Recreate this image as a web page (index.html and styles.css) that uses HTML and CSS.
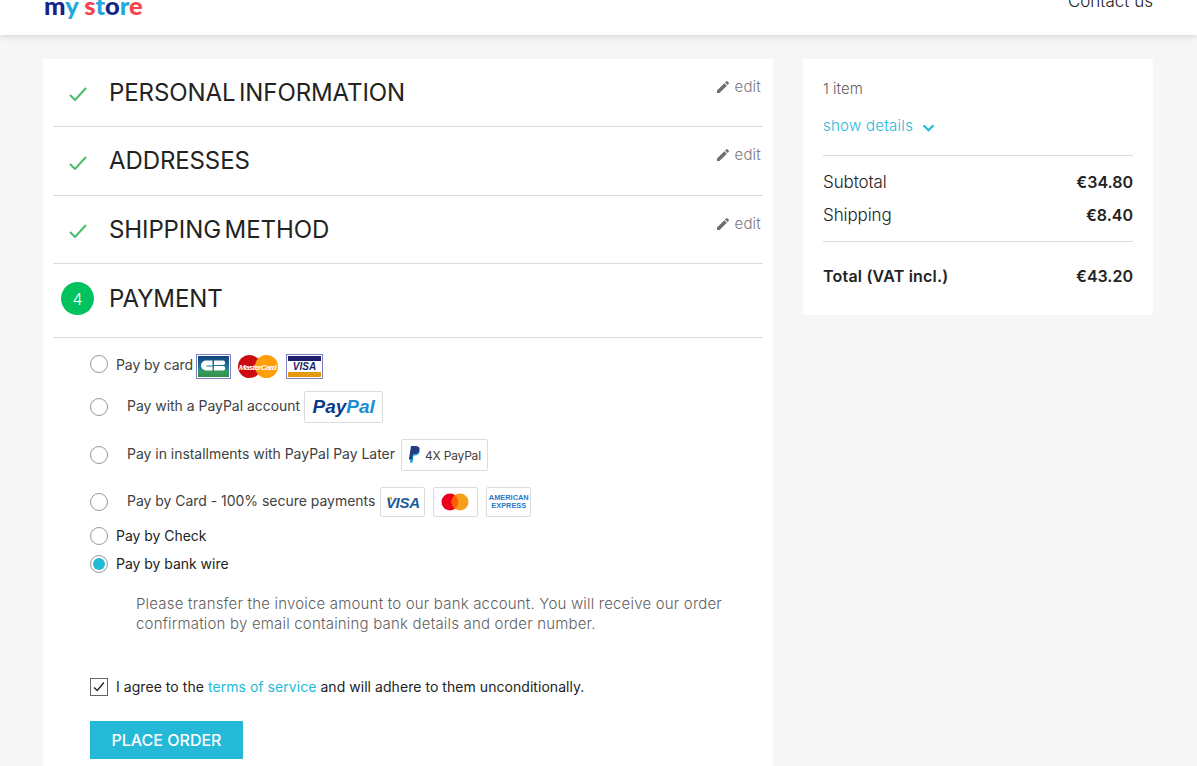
FILE: index.html
```html
<!DOCTYPE html>
<html lang="en">

<head>
    <meta charset="UTF-8">
    <meta name="viewport" content="width=device-width, initial-scale=1.0">
    <title>my store - Checkout</title>
    <link rel="stylesheet" href="styles.css">
</head>

<body>
    <header class="header">
        <a class="logo"><span class="navy">m</span><span class="cyan">y</span> <span class="red">s</span><span class="cyan">t</span><span class="navy">o</span><span class="cyan">r</span><span class="red">e</span></a>
        <a class="contact">Contact us</a>
    </header>

    <main class="page">
        <div class="steps">
            <section class="step">
                <svg class="check" viewBox="0 0 18 14"><path d="M1 8l5 5L17 1"/></svg>
                <h2>PERSONAL INFORMATION</h2>
                <a class="edit"><svg viewBox="0 0 24 24"><path d="M3 17.25V21h3.75L17.8 9.94l-3.75-3.75L3 17.25zM20.7 7.04a1 1 0 0 0 0-1.41l-2.34-2.34a1 1 0 0 0-1.41 0l-1.83 1.83 3.75 3.75 1.83-1.83z"/></svg>edit</a>
            </section>
            <section class="step tall">
                <svg class="check" viewBox="0 0 18 14"><path d="M1 8l5 5L17 1"/></svg>
                <h2>ADDRESSES</h2>
                <a class="edit"><svg viewBox="0 0 24 24"><path d="M3 17.25V21h3.75L17.8 9.94l-3.75-3.75L3 17.25zM20.7 7.04a1 1 0 0 0 0-1.41l-2.34-2.34a1 1 0 0 0-1.41 0l-1.83 1.83 3.75 3.75 1.83-1.83z"/></svg>edit</a>
            </section>
            <section class="step">
                <svg class="check" viewBox="0 0 18 14"><path d="M1 8l5 5L17 1"/></svg>
                <h2>SHIPPING METHOD</h2>
                <a class="edit"><svg viewBox="0 0 24 24"><path d="M3 17.25V21h3.75L17.8 9.94l-3.75-3.75L3 17.25zM20.7 7.04a1 1 0 0 0 0-1.41l-2.34-2.34a1 1 0 0 0-1.41 0l-1.83 1.83 3.75 3.75 1.83-1.83z"/></svg>edit</a>
            </section>
            <section class="step current">
                <span class="number">4</span>
                <h2>PAYMENT</h2>
            </section>

            <div class="options">
                <label class="option card-option">
                    <span class="radio"></span>
                    <span class="option-text">Pay by card</span>
                    <svg class="logo-cb" viewBox="0 0 35 25">
                        <defs>
                            <linearGradient id="cbfill" x1="0" y1="0" x2="0" y2="1">
                                <stop offset="0" stop-color="#12427f"/>
                                <stop offset="0.6" stop-color="#1d7f9f"/>
                                <stop offset="0.72" stop-color="#3a9a5a"/>
                                <stop offset="1" stop-color="#2e9150"/>
                            </linearGradient>
                        </defs>
                        <rect x="0.5" y="0.5" width="34" height="24" fill="#fff" stroke="#7f7fbf"/>
                        <rect x="2" y="2" width="31" height="21" fill="url(#cbfill)"/>
                        <path fill="#fff" d="M16.500 6.500H10a4.700 4.700 0 0 0 0 10h6.500v-4h-6v-1h6z"/>
                        <path fill="#fff" d="M18 6.500h9a2.200 2.200 0 0 1 0 4.400h-9zM18 12h9a2.200 2.200 0 0 1 0 4.500h-9z"/>
                    </svg>
                    <svg class="logo-mc" viewBox="0 0 40 23">
                        <circle cx="11.5" cy="11.5" r="11.5" fill="#cc0b10"/>
                        <circle cx="28.5" cy="11.5" r="11.5" fill="#ff9e0b"/>
                        <text x="20" y="14.5" text-anchor="middle" textLength="38">MasterCard</text>
                    </svg>
                    <svg class="logo-visa" viewBox="0 0 37 25">
                        <rect x="0.5" y="0.5" width="36" height="24" fill="#fff" stroke="#7f7fbf"/>
                        <rect x="2" y="2" width="33" height="5" fill="#1b1f6e"/>
                        <rect x="2" y="18" width="33" height="5" fill="#e39a0e"/>
                        <text x="18.5" y="16" text-anchor="middle">VISA</text>
                    </svg>
                </label>

                <label class="option wallet-option paypal-row">
                    <span class="radio"></span>
                    <span class="option-text">Pay with a PayPal account</span>
                    <span class="badge paypal-badge"><span class="pp-dark">Pay</span><span class="pp-light">Pal</span></span>
                </label>

                <label class="option wallet-option later-row">
                    <span class="radio"></span>
                    <span class="option-text">Pay in installments with PayPal Pay Later</span>
                    <span class="badge later-badge">
                        <svg viewBox="0 0 14 17">
                            <path fill="#179bd7" d="M11.6 4.2c.3 2.6-1.5 5.2-4.6 5.2H5.6L4.5 16.4H1.9l.5-3L4 5.8h4.8c1.200 0 2.200-.6 2.800-1.600z"/>
                            <path fill="#253b80" d="M3 0h4.700c2.600 0 4.200 1.300 3.900 3.600-.4 2.900-2.300 4.400-5 4.400H4.800l-.9 5.400H.9L3 0z"/>
                        </svg>
                        <span>4X PayPal</span>
                    </span>
                </label>

                <label class="option wallet-option cards-row">
                    <span class="radio"></span>
                    <span class="option-text">Pay by Card - 100% secure payments</span>
                    <span class="badge small-badge visa-badge">VISA</span>
                    <span class="badge small-badge">
                        <svg class="mc-plain" viewBox="0 0 28 18">
                            <circle cx="9" cy="9" r="8.500" fill="#eb001b"/>
                            <circle cx="19" cy="9" r="8.500" fill="#f79e1b"/>
                            <path fill="#ff5f00" d="M14 2.200a8.500 8.500 0 0 1 0 13.600 8.500 8.500 0 0 1 0-13.600z"/>
                        </svg>
                    </span>
                    <span class="badge small-badge amex-badge">AMERICAN<br>EXPRESS</span>
                </label>

                <label class="option check-row">
                    <span class="radio"></span>
                    <span class="option-text">Pay by Check</span>
                </label>

                <label class="option wire-row">
                    <span class="radio selected"></span>
                    <span class="option-text">Pay by bank wire</span>
                </label>

                <p class="wire-info">Please transfer the invoice amount to our bank account. You will receive our order confirmation by email containing bank details and order number.</p>

                <label class="terms">
                    <span class="checkbox"><svg viewBox="0 0 18 18"><path d="M3.500 9.500l3.500 3.500 7.500-9"/></svg></span>
                    <span class="terms-text">I agree to the <a class="link">terms of service</a> and will adhere to them unconditionally.</span>
                </label>

                <button class="place-order">PLACE ORDER</button>
            </div>
        </div>

        <aside class="summary">
            <p class="items">1 item</p>
            <a class="show-details">show details <svg viewBox="0 0 13 8"><path d="M1.500 1.200l5 5 5-5"/></svg></a>
            <div class="lines">
                <div class="line"><span>Subtotal</span><strong>€34.80</strong></div>
                <div class="line"><span>Shipping</span><strong>€8.40</strong></div>
            </div>
            <div class="line total"><span>Total (VAT incl.)</span><strong>€43.20</strong></div>
        </aside>
    </main>
</body>

</html>
```

FILE: styles.css
```css
* {
    margin: 0;
    padding: 0;
    box-sizing: border-box;
}

html,
body {
    height: 766px;
    overflow: hidden;
}

body {
    background: #f6f6f6;
    color: #232323;
    font-family: 'Inter', 'Open Sans', sans-serif;
    font-size: 14px;
}

a {
    text-decoration: none;
}

/* header is scrolled, only its bottom edge shows */
.header {
    height: 35px;
    padding: 0 44px;
    background: #fff;
    box-shadow: 0 2px 6px rgba(0, 0, 0, 0.12);
    display: flex;
    justify-content: space-between;
    align-items: flex-end;
    overflow: hidden;
    position: relative;
}

.logo {
    font-family: 'Lato', sans-serif;
    font-size: 25.500px;
    font-weight: 900;
    line-height: 24px;
    margin-bottom: 18px;
}

.navy { color: #14248a; }
.cyan { color: #1fa9dc; }
.red { color: #f9424b; }

.contact {
    font-size: 17px;
    font-weight: 300;
    line-height: 20px;
    color: #232323;
    margin-bottom: 24px;
}

.page {
    padding: 24px 44px 0 43px;
    display: flex;
    align-items: flex-start;
    gap: 30px;
}

.steps {
    width: 730px;
    background: #fff;
    padding: 0 10px;
    flex-shrink: 0;
}

.step {
    height: 68px;
    display: flex;
    align-items: center;
    border-bottom: 1px solid #dcdcdc;
    position: relative;
    padding-bottom: 1px;
}

.step.tall {
    height: 69px;
}

.step h2 {
    font-size: 24px;
    font-weight: 400;
    letter-spacing: -0.1px;
    word-spacing: -3px;
    color: #232323;
}

.check {
    width: 18px;
    height: 14px;
    margin-left: 16px;
    margin-right: 22px;
    margin-top: 4px;
}

.check path {
    fill: none;
    stroke: #4cbb6c;
    stroke-width: 2;
}

.edit {
    position: absolute;
    top: 18px;
    right: 2px;
    display: flex;
    align-items: center;
    gap: 3px;
    color: #7a7a7a;
    font-size: 15px;
    font-weight: 300;
    letter-spacing: 0.2px;
}

.edit svg {
    width: 16px;
    height: 16px;
    fill: #6e6e6e;
}

.step.current {
    height: 74px;
    padding-bottom: 4px;
}

.number {
    width: 33px;
    height: 33px;
    border-radius: 50%;
    background: #00c25f;
    color: #fff;
    font-size: 16px;
    font-weight: 300;
    display: flex;
    align-items: center;
    justify-content: center;
    margin-left: 8px;
    margin-right: 15px;
}

.options {
    padding-left: 37px;
}

.option {
    display: flex;
    align-items: center;
    color: #414141;
    font-size: 14px;
}

.option-text {
    margin-bottom: 3px;
    letter-spacing: -0.03px;
}

.radio {
    width: 18px;
    height: 18px;
    border: 1px solid #979797;
    border-radius: 50%;
    background: #fff;
    flex-shrink: 0;
    margin-right: 8px;
    position: relative;
}

.radio.selected::after {
    content: "";
    position: absolute;
    top: 2px;
    left: 2px;
    width: 12px;
    height: 12px;
    border-radius: 50%;
    background: #24b9d7;
}

.wallet-option .radio {
    margin-right: 19px;
}

.card-option {
    height: 25px;
    margin-top: 16px;
}

.card-option .radio {
    margin-bottom: 5px;
}

.card-option .option-text {
    margin-bottom: 4px;
    letter-spacing: -0.1px;
}

.logo-cb {
    width: 35px;
    height: 25px;
    margin-left: 3px;
}

.logo-mc {
    width: 40px;
    height: 23px;
    margin-left: 7px;
}

.logo-mc text {
    font-family: 'Liberation Sans', sans-serif;
    font-size: 8px;
    font-weight: 700;
    font-style: italic;
    fill: #fff;
}

.logo-visa {
    width: 37px;
    height: 25px;
    margin-left: 8px;
}

.logo-visa text {
    font-family: 'Liberation Sans', sans-serif;
    font-size: 10px;
    font-weight: 700;
    font-style: italic;
    fill: #1b1f6e;
}

.badge {
    display: flex;
    align-items: center;
    justify-content: center;
    border: 1px solid #dcdcdc;
    border-radius: 2px;
    background: #fff;
    flex-shrink: 0;
}

.paypal-row {
    height: 32px;
    margin-top: 12px;
}

.paypal-badge {
    width: 79px;
    height: 32px;
    margin-left: 4px;
    font-family: 'Liberation Sans', sans-serif;
    font-size: 19px;
    font-weight: 700;
    font-style: italic;
}

.pp-dark { color: #0b3a8a; }
.pp-light { color: #1a8ed1; }

.later-row {
    height: 32px;
    margin-top: 16px;
}

.later-badge {
    width: 87px;
    height: 32px;
    margin-left: 6px;
    gap: 3px;
    font-size: 12px;
    letter-spacing: -0.2px;
    color: #414141;
}

.later-badge svg {
    width: 14px;
    height: 17px;
    margin-bottom: 1px;
}

.cards-row {
    height: 30px;
    margin-top: 16px;
}

.small-badge {
    width: 45px;
    height: 30px;
    margin-left: 5px;
}

.small-badge + .small-badge {
    margin-left: 8px;
}

.visa-badge {
    font-family: 'Liberation Sans', sans-serif;
    font-size: 15px;
    font-weight: 700;
    font-style: italic;
    letter-spacing: -0.3px;
    color: #1a5b9c;
    position: relative;
}

/* orange flick on the V */
.visa-badge::before {
    content: "";
    position: absolute;
    top: 9px;
    left: 6px;
    width: 5px;
    height: 4px;
    background: #f2a93b;
    clip-path: polygon(0 0, 100% 0, 100% 100%);
}

.mc-plain {
    width: 28px;
    height: 18px;
    margin-right: 1px;
}

.amex-badge {
    font-family: 'Liberation Sans', sans-serif;
    font-size: 7.400px;
    font-weight: 700;
    line-height: 8px;
    color: #2a78c8;
    text-align: center;
}

.check-row {
    height: 20px;
    margin-top: 9px;
    color: #232323;
}

.check-row .option-text,
.wire-row .option-text {
    margin-bottom: 1px;
}

.wire-row {
    height: 20px;
    margin-top: 8px;
    color: #232323;
}

.wire-info {
    margin: 20px 0 0 46px;
    width: 600px;
    font-size: 15px;
    font-weight: 300;
    line-height: 20px;
    letter-spacing: 0.19px;
    color: #5f5f5f;
}

.terms {
    display: flex;
    align-items: center;
    height: 20px;
    margin-top: 43px;
    font-size: 14px;
    color: #232323;
}

.terms-text {
    letter-spacing: 0.05px;
    margin-bottom: 1px;
}

.checkbox {
    width: 18px;
    height: 18px;
    border: 1px solid #666;
    margin-right: 8px;
    flex-shrink: 0;
}

.checkbox svg {
    display: block;
    width: 16px;
    height: 16px;
}

.checkbox path {
    fill: none;
    stroke: #232323;
    stroke-width: 1.600;
}

.link {
    color: #24b9d7;
}

.place-order {
    display: block;
    width: 153px;
    height: 38px;
    margin: 24px 0 7px;
    border: none;
    background: #24b9d7;
    color: #fff;
    font-family: inherit;
    font-size: 16px;
    font-weight: 500;
}

.summary {
    width: 350px;
    background: #fff;
    padding: 20px;
    height: 256px;
}

.items {
    color: #5f5f5f;
    font-size: 15px;
    font-weight: 300;
    line-height: 20px;
}

.show-details {
    display: flex;
    align-items: center;
    gap: 9px;
    margin-top: 17px;
    color: #24b9d7;
    font-size: 15px;
    font-weight: 300;
    letter-spacing: 0.27px;
    line-height: 20px;
}

.show-details svg {
    width: 13px;
    height: 8px;
    margin-top: 3px;
}

.show-details path {
    fill: none;
    stroke: #24b9d7;
    stroke-width: 2.200;
}

.lines {
    margin-top: 19px;
    padding: 16px 0;
    border-top: 1px solid #dcdcdc;
    border-bottom: 1px solid #dcdcdc;
    display: flex;
    flex-direction: column;
    gap: 13px;
}

.line {
    display: flex;
    justify-content: space-between;
    align-items: center;
    font-size: 17px;
    font-weight: 300;
    letter-spacing: -0.1px;
    line-height: 20px;
    color: #232323;
}

.line strong {
    font-size: 16px;
    font-weight: 600;
    letter-spacing: 0;
    color: #232323;
}

.total {
    margin-top: 24px;
    font-size: 16px;
    font-weight: 600;
    letter-spacing: 0.2px;
}
```
